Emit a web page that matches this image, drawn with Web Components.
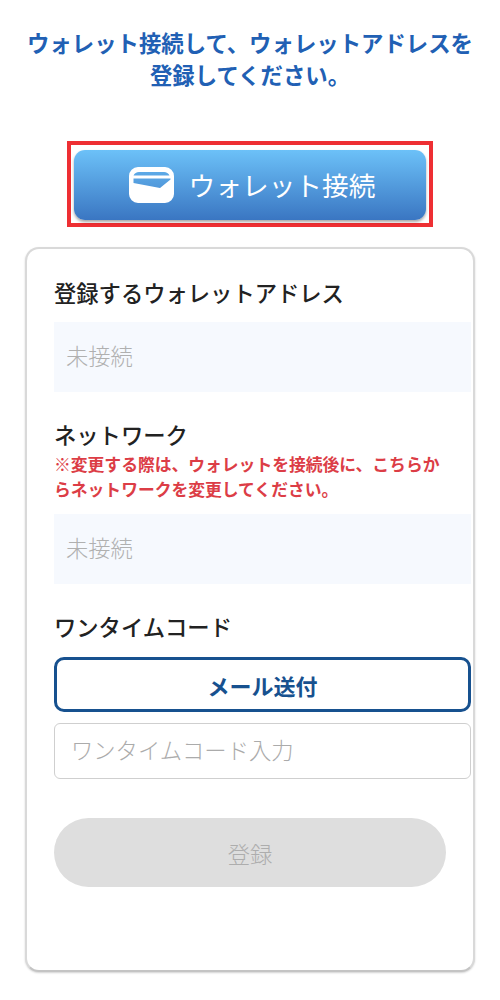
<!DOCTYPE html>
<html lang="ja">
<head>
<meta charset="utf-8">
<title>ウォレット接続</title>
<style>
    html, body {
        margin: 0;
        background: #fff;
        font-family: "Noto Sans CJK JP", "Noto Sans", sans-serif;
    }
</style>
</head>
<body>
<wallet-page>
    <connect-button>ウォレット接続</connect-button>
    <form-card>
        <form-field label="登録するウォレットアドレス">
            <readonly-box>未接続</readonly-box>
        </form-field>
        <form-field label="ネットワーク" note="※変更する際は、ウォレットを接続後に、こちらからネットワークを変更してください。">
            <readonly-box>未接続</readonly-box>
        </form-field>
        <form-field label="ワンタイムコード">
            <mail-button>メール送付</mail-button>
            <code-input placeholder="ワンタイムコード入力"></code-input>
        </form-field>
        <submit-button>登録</submit-button>
    </form-card>
</wallet-page>

<script>
//class WalletPage: page column with the heading, the red framed button and the card
class WalletPage extends HTMLElement {
    constructor() {
        super();
        let shadowRoot = this.attachShadow({mode: 'open'});
        shadowRoot.innerHTML = `
            <style>
                :host {
                    display: flex;
                    flex-direction: column;
                    align-items: center;
                    height: 1000px;
                    box-sizing: border-box;
                    padding: 26px 25px 0;
                    overflow: hidden;
                }
                h1 {
                    margin: 0 0 51px;
                    font-size: 22.4px;
                    line-height: 32px;
                    font-weight: 700;
                    color: #2160b4;
                    text-align: center;
                    white-space: nowrap;
                }
            </style>
            <h1>ウォレット接続して、ウォレットアドレスを<br>登録してください。</h1>
            <slot></slot>
        `;
    }
}

//class ConnectButton: blue gradient button inside the red frame
class ConnectButton extends HTMLElement {
    constructor() {
        super();
        let shadowRoot = this.attachShadow({mode: 'open'});
        shadowRoot.innerHTML = `
            <style>
                :host {
                    display: block;
                    box-sizing: border-box;
                    width: 366px;
                    height: 86px;
                    padding: 5px 3px 3px;
                    border: 4px solid #ee2f33;
                    margin-bottom: 20px;
                }
                button {
                    display: flex;
                    align-items: center;
                    justify-content: center;
                    gap: 15px;
                    width: 352px;
                    height: 70px;
                    margin: 0;
                    padding: 0 0 0 4px;
                    border: 0;
                    border-radius: 11px;
                    background: linear-gradient(#6cc1f8, #3a76c2);
                    box-shadow: 0 2px 3px rgba(0, 0, 0, .35);
                    color: #fff;
                    font: 400 26.7px "Noto Sans CJK JP", sans-serif;
                }
                svg { display: block; flex: none; }
                span { padding-bottom: 2px; }
            </style>
            <button>
                <svg width="45" height="36" viewBox="0 0 45 36">
                    <path fill="#fff" fill-rule="evenodd" d="M9 0H36a9 9 0 0 1 9 9V27a9 9 0 0 1-9 9H9a9 9 0 0 1-9-9V9a9 9 0 0 1 9-9Z
                        M4.5 8.5C5.5 6.5 7.5 5 10 5H35C37.5 5 39.5 6.5 40.5 8.5Z
                        M4.5 11.5H41.5V12.5L31 21L4.5 16Z"/>
                </svg>
                <span><slot></slot></span>
            </button>
        `;
    }
}

//class FormCard: rounded card around the fields
class FormCard extends HTMLElement {
    constructor() {
        super();
        let shadowRoot = this.attachShadow({mode: 'open'});
        shadowRoot.innerHTML = `
            <style>
                :host {
                    display: flex;
                    flex-direction: column;
                    box-sizing: border-box;
                    width: 450px;
                    height: 725px;
                    padding: 26px 2px 0 27px;
                    border: 2px solid #d9d9d9;
                    border-bottom-color: #c4c4c4;
                    border-radius: 14px;
                    box-shadow: 0 1px 2px rgba(0, 0, 0, .18);
                    background: #fff;
                }
            </style>
            <slot></slot>
        `;
    }
}

//class FormField: label, optional red note, then the slotted controls
class FormField extends HTMLElement {
    constructor() {
        super();
        let shadowRoot = this.attachShadow({mode: 'open'});
        shadowRoot.innerHTML = `
            <style>
                :host {
                    display: block;
                    margin-bottom: 25px;
                }
                .label {
                    padding-top: 1px;
                    font-size: 22.3px;
                    line-height: 32px;
                    font-weight: 500;
                    color: #222;
                    margin-bottom: 14px;
                }
                .note {
                    display: none;
                    width: 396px;
                    margin: -12px 0 12px;
                    font-size: 16.8px;
                    line-height: 25px;
                    font-weight: 700;
                    color: #dc3d46;
                }
                .stack {
                    display: flex;
                    flex-direction: column;
                    gap: 11px;
                }
            </style>
            <div class="label"></div>
            <div class="note"></div>
            <div class="stack"><slot></slot></div>
        `;
        shadowRoot.querySelector('.label').textContent = this.getAttribute('label');
        let note = this.getAttribute('note');
        if (note) {
            let noteEl = shadowRoot.querySelector('.note');
            noteEl.textContent = note;
            noteEl.style.display = 'block';
        }
    }
}

//class ReadonlyBox: pale blue box with grey text
class ReadonlyBox extends HTMLElement {
    constructor() {
        super();
        let shadowRoot = this.attachShadow({mode: 'open'});
        shadowRoot.innerHTML = `
            <style>
                :host {
                    display: flex;
                    align-items: center;
                    box-sizing: border-box;
                    height: 70px;
                    padding: 0 0 5px 12px;
                    background: #f6f9fe;
                    color: #b0b0b0;
                    font-size: 22.3px;
                    font-weight: 300;
                }
            </style>
            <slot></slot>
        `;
    }
}

//class MailButton: outlined navy button
class MailButton extends HTMLElement {
    constructor() {
        super();
        let shadowRoot = this.attachShadow({mode: 'open'});
        shadowRoot.innerHTML = `
            <style>
                :host {
                    display: flex;
                    align-items: center;
                    justify-content: center;
                    box-sizing: border-box;
                    height: 55px;
                    margin-top: 1px;
                    border: 3px solid #17518f;
                    border-radius: 10px;
                    color: #17518f;
                    font-size: 22px;
                    font-weight: 700;
                }
            </style>
            <slot></slot>
        `;
    }
}

//class CodeInput: text input with a placeholder
class CodeInput extends HTMLElement {
    constructor() {
        super();
        let shadowRoot = this.attachShadow({mode: 'open'});
        shadowRoot.innerHTML = `
            <style>
                :host {
                    display: block;
                }
                input {
                    display: block;
                    box-sizing: border-box;
                    width: 100%;
                    height: 56px;
                    margin: 0;
                    padding: 0 16px 4px;
                    border: 1.5px solid #cfcfcf;
                    border-radius: 6px;
                    background: #fff;
                    outline: none;
                    font: 300 22.3px "Noto Sans CJK JP", sans-serif;
                }
                input::placeholder {
                    color: #ababab;
                    opacity: 1;
                }
            </style>
            <input type="text">
        `;
        shadowRoot.querySelector('input').placeholder = this.getAttribute('placeholder');
    }
}

//class SubmitButton: disabled grey pill
class SubmitButton extends HTMLElement {
    constructor() {
        super();
        let shadowRoot = this.attachShadow({mode: 'open'});
        shadowRoot.innerHTML = `
            <style>
                :host {
                    display: flex;
                    align-items: center;
                    justify-content: center;
                    box-sizing: border-box;
                    width: 392px;
                    height: 69px;
                    margin-top: 14px;
                    border-radius: 35px;
                    background: #dedede;
                    color: #adadad;
                    font-size: 22.3px;
                    font-weight: 300;
                }
            </style>
            <slot></slot>
        `;
    }
}

window.customElements.define('wallet-page', WalletPage);
window.customElements.define('connect-button', ConnectButton);
window.customElements.define('form-card', FormCard);
window.customElements.define('form-field', FormField);
window.customElements.define('readonly-box', ReadonlyBox);
window.customElements.define('mail-button', MailButton);
window.customElements.define('code-input', CodeInput);
window.customElements.define('submit-button', SubmitButton);
</script>
</body>
</html>
